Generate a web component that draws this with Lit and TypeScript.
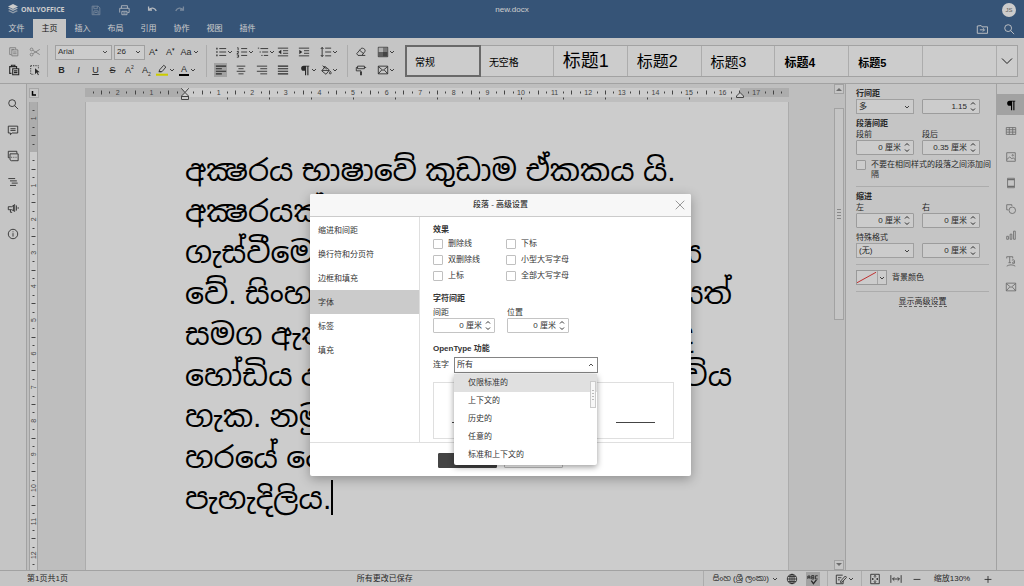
import { LitElement, html, svg, css, TemplateResult } from "lit";
import { customElement, property, state } from "lit/decorators.js";
import { classMap } from "lit/directives/class-map.js";

/* Icon strokes are drawn on a 14 x 14 grid. */
const glyphs: Record<string, any> = {
  save: svg`<path d="M2.5 2.5h7l2 2v8h-9zM4.5 2.5v3h4v-3M4.5 12v-4h5v4M5.5 10h3"/>`,
  print: svg`<path d="M4 5V2h7v3M2 10V5h11v5h-2M4.500 8.500h6v4h-6zM6 10.500h3"/>`,
  undo: svg`<path d="M3 3v4h4M3.500 6.500C6 4 10 4 12 8" stroke-width="1.500"/>`,
  redo: svg`<path d="M11 3v4H7M10.500 6.500C8 4 4 4 2 8" stroke-width="1.500"/>`,
  copy: svg`<path d="M4 10H2V2h7v2M4.500 4.500h7v7h-7zM6 7h4M6 9h4M4 4h3"/>`,
  cut: svg`<circle cx="3" cy="4" r="1.600"/><circle cx="3" cy="10" r="1.600"/><path d="M4.500 5l8 5M4.500 9l8-5"/>`,
  paste: svg`<path d="M4 11H2V3h8v2M4 3V1.500h4V3M5.500 5.500h7v7h-7zM7 8h4M7 10h4" stroke-width="1.300"/>`,
  selectAll: svg`<path d="M2 2h9v3M2 2v10h4" stroke-dasharray="1.500 1.200"/><path d="M7 5v7l2-2 1.500 3 1-.5-1.500-3h2.500z" fill="currentColor" stroke="none"/>`,
  bullets: svg`<path d="M5 3h8M5 7h8M5 11h8"/><path d="M1.500 3h1.500M1.500 7h1.500M1.500 11h1.500" stroke-width="2"/>`,
  numbers: svg`<path d="M6 3h7M6 7h7M6 11h7M1.500 2h1v3M1 6.500h2v1l-2 1.500h2M1 10.500h2v2.500H1"/>`,
  levels: svg`<path d="M4 3h9M6 7h7M8 11h5M1 2.500h1.500M3 7h1.500M5 11h1.500"/>`,
  outdent: svg`<path d="M1 2.500h12M7 5.500h6M7 8.500h6M1 11.500h12"/><path d="M5 4.500v5L1.500 7z" fill="currentColor" stroke="none"/>`,
  indent: svg`<path d="M1 2.500h12M7 5.500h6M7 8.500h6M1 11.500h12"/><path d="M1.500 4.500v5L5 7z" fill="currentColor" stroke="none"/>`,
  spacing: svg`<path d="M6 2.500h7M6 7h7M6 11.500h7M2.500 2v10M1 3.500l1.500-2L4 3.500M1 10.500l1.500 2L4 10.500"/>`,
  left: svg`<path d="M1 2.500h12M1 5.500h7M1 8.500h12M1 11.500h7" stroke-width="1.300"/>`,
  center: svg`<path d="M2 2.500h10M4 5.500h6M2 8.500h10M4 11.500h6"/>`,
  right: svg`<path d="M1 2.500h12M5 5.500h8M1 8.500h12M5 11.500h8"/>`,
  justify: svg`<path d="M1 2.500h12M1 5.500h12M1 8.500h12M1 11.500h12" stroke-width="1.300"/>`,
  pilcrow: svg`<path d="M7 8H5.500a3 3 0 0 1 0-6H12v1h-1v10H9.700V3H8.300v10H7z" fill="currentColor" stroke="none"/>`,
  fill: svg`<path d="M6 3L2 8l5 4 4-5zM3 2l5 4M2.500 7.500h8M12 8.500c-1.500 2-1.500 3 0 3s1.500-1 0-3zM5 5V2.500"/>`,
  eraser: svg`<path d="M2 9l5-6c2-1.500 6 1 4.500 3.500L8 11H3.500zM5.500 5l4.500 4M8 11h4"/>`,
  theme: svg`<path d="M1.500 1.500h11v11h-11z"/><path d="M2 7h5v5H2z" fill="#777" stroke="none"/><path d="M7 2h5v5H7z" fill="#999" stroke="none"/><path d="M7 7h5v5H7z" fill="#555" stroke="none"/><path d="M2 2h5v5H2z" fill="#ddd" stroke="none"/>`,
  brush: svg`<path d="M3 2.500h8v3H3zM3 4H1.500v4H7v2M11 4h2"/><path d="M7 9v4" stroke-width="2"/>`,
  mail: svg`<path d="M1.500 2.500h11v9h-11zM1.500 3l5.500 4.500L12.500 3M1.500 11.500l4-4.500M12.500 11.500l-4-4.500"/>`,
  pen: svg`<path d="M4 7l5-5.500 2.500 2L7 9H4zM3 9h3"/><path d="M0 12.500h14" stroke="#ff0" stroke-width="2.400"/>`,
  search: svg`<circle cx="6" cy="6" r="4"/><path d="M9 9l4 4"/>`,
  comment: svg`<path d="M1.500 2.500h11v8H6l-2 2v-2H1.500zM4 5.500h6M4 7.500h6"/>`,
  chat: svg`<path d="M3 9H1.500V1.500h10V4M3.500 4.500h9.500v8H5l-1.500-1zM5 8.500h1M7.500 8.500h1M10 8.500h1"/>`,
  headings: svg`<path d="M1.500 3h8M3.500 5.700h8M5.500 8.300h7M3.500 11h7"/>`,
  feedback: svg`<path d="M1.500 5.500h4L9 3v8L5.500 9h-4zM4 9v3h2M7.500 4v6M11 4v6M13 6v2"/>`,
  about: svg`<circle cx="7" cy="7" r="5.500"/><path d="M7 6v4M7 4v1"/>`,
  folder: svg`<path d="M1.500 3.500V12h12V4.500H7l-1-1.500zM4.500 8h5M8 6l2 2-2 2"/>`,
  table: svg`<path d="M1.500 3h11v8h-11zM1.500 5.500h11M1.500 8.300h11M5 3v8M9 3v8"/>`,
  image: svg`<path d="M2 2h10v10H2zM2 10l3.500-3 2.500 2 1.500-1L12 10"/><circle cx="9" cy="5" r=".8"/>`,
  header: svg`<path d="M3 1.500h8v11H3z"/><path d="M3 3h8M3 11h8" stroke-width="1.500"/>`,
  shape: svg`<path d="M8 3.500V2H2v6h2"/><circle cx="8.500" cy="8.500" r="3.800"/>`,
  chart: svg`<path d="M2 8.500h2v3.500H2zM6 6h2v6H6zM10 2.500h2V12h-2z"/>`,
  textart: svg`<path d="M2 4V2h7v2M5.500 2v7M4 9h3M8 6c3-1 3 0 3 1v3M11 8c-3 0-3 2-1.500 2L11 9M2 13c3-2 7-2 10 0"/>`,
  globe: svg`<circle cx="7" cy="7" r="5.500"/><ellipse cx="7" cy="7" rx="2.500" ry="5.500"/><path d="M1.500 7h11M2.500 4h9M2.500 10h9M7 1.500v11"/>`,
  check: svg`<path d="M5 9l2.500 3.500L11 8" stroke-width="1.500"/><path d="M1 7V3.500h2.500V7M1 5h2.500M5.500 3v4H8V3zM5.500 5H8M12.500 3.200H10V7h2.500"/>`,
  track: svg`<path d="M9 2.500H1.500v10h8V9M3.500 5.500h4M3.500 8h2M6.500 9.500l5.500-6 1.500 1.500-5 5.500-2 .5z"/>`,
  fitPage: svg`<path d="M2 1.500h10v11H2zM7 3v2.500M5.800 4L7 2.800 8.200 4M7 11V8.500M5.800 10L7 11.200 8.200 10M3.500 7H6M8 7h2.500M4.500 6l-1 1 1 1M9.500 6l1 1-1 1"/>`,
  fitWidth: svg`<path d="M1 2.500v9M13 2.500v9M3 7h8M5 5L3 7l2 2M9 5l2 2-2 2"/>`,
  minus: svg`<path d="M3 7.500h8"/>`,
  plus: svg`<path d="M3 7.500h8M7 3.500v8"/>`,
  close: svg`<path d="M2 2l10 10M12 2L2 12"/>`,
};
const icon = (name: string) =>
  html`<svg class="icon" viewBox="0 0 14 14" aria-hidden="true">${glyphs[name]}</svg>`;
const caret = (up = false) => html`<svg class="caret" viewBox="0 0 8 8" aria-hidden="true">
  <path d=${up ? "M2 5l2-2 2 2" : "M2 3l2 2 2-2"} /></svg>`;

const shared = css`
  * { box-sizing: border-box; }
  button, input, select { font: inherit; color: inherit; margin: 0; padding: 0; border: 0; background: none; border-radius: 0; }
  button { display: flex; align-items: center; justify-content: center; cursor: pointer; white-space: nowrap; }
  select { appearance: none; min-width: 0; outline: none; }
  .icon { width: 12px; height: 12px; flex: none; fill: none; stroke: currentColor; stroke-width: 1; }
  .caret { width: 8px; height: 8px; flex: none; fill: none; stroke: currentColor; stroke-width: 1; opacity: .85; }
  .combo { display: flex; align-items: center; height: 15px; padding: 0 2px; border: 1px solid #c8c8c8; background: #fff; }
  .combo select { flex: 1; }
  input[type="checkbox"] { appearance: none; flex: none; width: 10px; height: 10px; border: 1px solid #c0c0c0; border-radius: 1px; background: #fff; }
  input[type="checkbox"]:checked { background: #444; }
`;

@customElement("spin-field")
class SpinField extends LitElement {
  @property() value = "";
  @property() label = "";
  static styles = [shared, css`
    :host { display: flex; height: 15px; align-items: center; border: 1px solid #c4c4c4; border-radius: 1px; background: #fff; }
    input { flex: 1; width: 0; min-width: 0; text-align: right; outline: none; }
    svg { width: 10px; height: 13px; fill: none; stroke: currentColor; flex: none; margin: 0 1px; }
  `];
  render() {
    return html`<input aria-label=${this.label} .value=${this.value} />
      <svg viewBox="0 0 10 13" aria-hidden="true"><path d="M3 4.500l2-2 2 2M3 8.500l2 2 2-2" /></svg>`;
  }
}

const UNIT = 33.6;

@customElement("page-ruler")
class PageRuler extends LitElement {
  @property({ type: Boolean, reflect: true }) vertical = false;
  static styles = css`
    :host { display: block; overflow: hidden; }
    svg { display: block; width: 100%; height: 100%; }
    text { font: 7px "Liberation Sans", sans-serif; fill: #555; text-anchor: middle; }
    .band { fill: #d9d9d9; }
    .live { fill: #fff; }
    .tick { stroke: #555; }
    .marker { fill: #fff; stroke: #555; }
  `;
  private marks(zero: number, from: number, to: number) {
    const out: any[] = [];
    for (let q = from; q <= to; q++) {
      if (q === 0) continue;
      const p = zero + (q * UNIT) / 4;
      if (q % 4 === 0) {
        const n = Math.abs(q / 4);
        out.push(this.vertical
          ? svg`<text transform="translate(6 ${p}) rotate(-90)">${n}</text>`
          : svg`<text x=${p} y="7">${n}</text>`);
      } else {
        const c = Math.round(p) + 0.5;
        const h = q % 2 === 0 ? 2 : 1;
        out.push(this.vertical
          ? svg`<line class="tick" x1=${3.5 - h} x2=${3.5 + h} y1=${c} y2=${c} />`
          : svg`<line class="tick" y1=${4.5 - h} y2=${4.5 + h} x1=${c} x2=${c} />`);
      }
    }
    return out;
  }
  render() {
    if (this.vertical) {
      return html`<svg aria-hidden="true"><rect class="band" width="9" height="50" />
        <rect class="live" y="50" width="9" height="100%" />${this.marks(50, -5, 51)}</svg>`;
    }
    const tabs = Array.from({ length: 13 }, (_, i) => 142.5 + i * 42);
    return html`<svg aria-hidden="true">
      <rect class="band" width="100%" height="9" />
      <rect class="live" x="100" width="555" height="9" />
      ${this.marks(100, -11, 71)}
      ${tabs.map((x) => svg`<line class="tick" x1=${x} x2=${x} y1="9.500" y2="11.500" />`)}
      <path class="marker" d="M96.500 -1.500h7v2L100 4.500l-3.500-4zM100 4.500l3.500 3.500v3.500h-7V8zM96.500 8.500h7" />
      <path class="marker" d="M655 4.500l3.500 3.500v1.500h-7V8z" />
    </svg>`;
  }
}

@customElement("paragraph-dialog")
class ParagraphDialog extends LitElement {
  @state() tab = "字体";
  static styles = [shared, css`
    :host { display: block; width: 381px; border-radius: 2px; background: #fff; color: #333; font-size: 8px; line-height: 10px; box-shadow: 0 3px 12px rgba(0, 0, 0, .3); }
    header { display: grid; grid-template-columns: 22px 1fr 22px; align-items: center; height: 23px; background: #f7f7f7; border-bottom: 1px solid #cbcbcb; border-radius: 2px 2px 0 0; }
    h2, h3 { margin: 0; font-size: 8px; line-height: 10px; }
    h2 { grid-column: 2; text-align: center; font-weight: 500; }
    header button { color: #888; }
    .body { display: grid; grid-template-columns: 110px 1fr; height: 225px; }
    nav { padding-top: 1px; border-right: 1px solid #dfdfdf; }
    nav button { width: 100%; height: 24px; justify-content: flex-start; padding: 1px 0 0 8px; }
    nav .active { background: #cbcbcb; }
    .pane { padding: 8px 17px 0 13px; }
    .checks { display: grid; grid-template-columns: 73px 1fr; row-gap: 6px; margin: 4px 0 13px; }
    label { display: flex; align-items: center; gap: 5px; }
    .fields { display: flex; gap: 12px; margin: 4px 0 11px; }
    .field { display: block; width: 62px; }
    .field span { display: block; }
    .liga { display: flex; align-items: center; gap: 5px; margin-top: 3px; position: relative; }
    .liga .combo { width: 144px; height: 16px; border-color: #848484; }
    .preview { display: flex; justify-content: space-between; margin-top: 9px; height: 57px; padding: 39px 18px 0; border: 1px solid #dfdfdf; }
    .rule { width: 39px; height: 1px; background: #444; }
    .menu { position: absolute; left: 21px; top: 17px; width: 143px; margin: 0; padding: 0 0 1px; list-style: none; background: #fff; border-radius: 2px; box-shadow: 0 2px 6px rgba(0, 0, 0, .4); }
    .menu li { height: 18px; padding: 4px 14px; }
    .menu .hover { background: #e0e0e0; }
    .thumb { position: absolute; right: 1px; top: 7px; width: 6px; height: 27px; border: 1px solid #cbcbcb; background: #f7f7f7; display: flex; flex-direction: column; align-items: center; justify-content: center; gap: 2px; }
    .thumb i { width: 2px; height: 1px; background: #bbb; }
    footer { display: flex; justify-content: center; gap: 7px; padding: 10px 0 8px; border-top: 1px solid #dfdfdf; }
    footer button { width: 59px; height: 15px; border-radius: 1px; border: 1px solid #c0c0c0; }
    footer .primary { background: #444; border-color: #444; color: #fff; }
  `];
  render() {
    const tabs = ["缩进和间距", "换行符和分页符", "边框和填充", "字体", "标签", "填充"];
    const effects = ["删除线", "下标", "双删除线", "小型大写字母", "上标", "全部大写字母"];
    const ligatures = ["仅限标准的", "上下文的", "历史的", "任意的", "标准和上下文的"];
    return html`
      <header><h2>段落 - 高级设置</h2><button aria-label="关闭">${icon("close")}</button></header>
      <div class="body">
        <nav>${tabs.map((t) => html`<button class=${classMap({ active: t === this.tab })}
          @click=${() => (this.tab = t)}>${t}</button>`)}</nav>
        <div class="pane">
          <h3>效果</h3>
          <div class="checks">${effects.map((e) => html`<label><input type="checkbox" />${e}</label>`)}</div>
          <h3>字符间距</h3>
          <div class="fields">
            <div class="field"><span>间距</span><spin-field label="间距" value="0 厘米"></spin-field></div>
            <div class="field"><span>位置</span><spin-field label="位置" value="0 厘米"></spin-field></div>
          </div>
          <h3>OpenType 功能</h3>
          <div class="liga">
            <label for="liga">连字</label>
            <div class="combo"><select id="liga"><option>所有</option></select>${caret(true)}</div>
            <ul class="menu">
              ${ligatures.map((l, i) => html`<li class=${classMap({ hover: i === 0 })}>${l}</li>`)}
              <div class="thumb"><i></i><i></i><i></i><i></i></div>
            </ul>
          </div>
          <div class="preview"><div class="rule"></div><div class="rule"></div></div>
        </div>
      </div>
      <footer><button class="primary" aria-label="确定"></button><button aria-label="取消"></button></footer>`;
  }
}

interface Line { head: string; tail?: string; inset?: number; }

@customElement("app-root")
class AppRoot extends LitElement {
  static styles = [shared, css`
    :host { display: flex; flex-direction: column; height: 100vh; position: relative; overflow: hidden; background: #f7f7f7; color: #222; font: 8px/10px "Liberation Sans", "Noto Sans CJK SC", "Noto Sans Sinhala", sans-serif; }
    .top { background: #446995; color: #fff; }
    .title { display: grid; grid-template-columns: 1fr auto 1fr; align-items: center; height: 19px; padding: 0 8px; }
    .brand { display: flex; align-items: center; gap: 20px; }
    .logo { display: flex; align-items: center; gap: 3px; width: 64px; font: bold 7px/10px "Open Sans", sans-serif; }
    .logo svg { width: 10px; height: 11px; flex: none; fill: #fff; }
    .brand button { width: 8px; opacity: .85; }
    .brand button.off { opacity: .45; }
    .avatar { justify-self: end; width: 14px; height: 14px; border-radius: 50%; background: #fff; color: #777; font-size: 6px; line-height: 14px; text-align: center; }
    .tabs { display: flex; height: 19px; padding-right: 9px; align-items: stretch; }
    .tabs button { width: 33px; }
    .tabs .active { background: #f7f7f7; color: #222; }
    .tabs .tools { display: flex; gap: 15px; margin-left: auto; }
    .tabs .tools button { width: 12px; }
    .toolbar { display: flex; height: 46px; padding: 7px 6px 6px 0; border-bottom: 1px solid #cbcbcb; color: #333; }
    .group { display: flex; flex-direction: column; gap: 4px; padding: 0 7px; border-right: 1px solid #d8d8d8; }
    .group.clip { padding: 0 2px 0 3px; }
    .group.letters { padding: 0 5px; }
    .group.last { border-right: 0; }
    .row { display: flex; align-items: center; height: 14px; }
    .row button { width: 17px; height: 14px; }
    .clip .row button { width: 21px; }
    .row .wide { width: 22px; }
    .row .list { width: 21px; }
    .row .list .icon { margin-right: -1px; }
    .row .solo { justify-content: flex-start; }
    .row .active { background: #cbcbcb; width: 13px; margin-right: 8px; }
    .row .dim { color: #999; }
    .row .combo { margin-left: 2px; }
    .row .font { width: 57px; color: #444; }
    .row .size { width: 31px; }
    .letters button { font-size: 9px; }
    .letters .ink { display: inline-block; line-height: 9px; border-bottom: 2px solid #000; width: 10px; text-align: center; }
    .row sup, .row sub { font-size: 5px; line-height: 0; }
    .styles { flex: 1; display: flex; margin-left: 1px; height: 32px; border: 1px solid #cbcbcb; background: #fff; color: #000; }
    .styles .style { flex: 1; justify-content: flex-start; padding-left: 9px; border-right: 1px solid #d8d8d8; }
    .styles .style.chosen { outline: 2px solid #848484; outline-offset: -1px; }
    .styles .more { width: 20px; }
    .styles .more .caret { width: 20px; height: 20px; stroke-width: .4; }
    .s10 { font-size: 10px; padding-top: 4px; } .s18 { font-size: 18px; } .s16 { font-size: 16px; padding-top: 1px; } .s14 { font-size: 14px; padding-top: 2px; }
    .s12 { font-size: 12px; font-weight: bold; padding-top: 4px; } .s11 { font-size: 11px; font-weight: bold; padding-top: 4px; }
    .main { flex: 1; min-height: 0; display: flex; color: #333; }
    .rail { display: flex; flex-direction: column; width: 27px; padding-top: 7px; border-right: 1px solid #cbcbcb; }
    .rail button { height: 26px; }
    .rail.right { width: 28px; border-right: 0; border-left: 1px solid #cbcbcb; color: #888; padding-top: 10px; gap: 5px; }
    .rail.right button { height: 21px; }
    .rail.right .active { background: #cbcbcb; color: #000; }
    .editor { flex: 1; min-width: 0; display: grid; grid-template-columns: 12px 1fr 11px; grid-template-rows: 18px 1fr; background: #eee; border-right: 1px solid #cbcbcb; }
    .corner { margin: 4px 0 4px 2px; border: 1px solid #d0d0d0; background: #f7f7f7; }
    .corner svg { display: block; width: 7px; height: 8px; fill: none; stroke: #000; stroke-width: 1.5; }
    .hruler { margin: 3px 45px 0 46px; padding-top: 1px; height: 15px; }
    .vruler { margin: 0 1px 0 2px; border: solid #cbcbcb; border-width: 0 1px; }
    .page { margin: 0 45px 0 46px; padding: 48px 50px 0 99px; background: #fff; border: solid #d8d8d8; border-width: 0 1px 0 1px; color: #000; font-size: 30px; line-height: 41px; overflow: hidden; }
    .line { display: flex; justify-content: space-between; white-space: pre; height: 41px; }
    .caretbar { display: inline-block; width: 2px; height: 35px; background: #000; vertical-align: -6px; }
    .scroll { grid-column: 3; grid-row: 1 / 3; display: flex; flex-direction: column; justify-content: space-between; width: 10px; }
    .scroll button { width: 10px; height: 10px; border: 1px solid #cbcbcb; background: #f7f7f7; color: #888; }
    .track { flex: 1; padding-top: 14px; }
    .bar { height: 212px; border: 1px solid #cbcbcb; background: #f7f7f7; display: flex; flex-direction: column; align-items: center; justify-content: center; gap: 2px; }
    .bar i { width: 4px; height: 1px; background: #aaa; }
    .side { width: 150px; padding: 5px 0 0 10px; }
    .side h3 { margin: 0; font-size: 8px; line-height: 10px; }
    .pair { display: grid; grid-template-columns: 58px 58px; column-gap: 8px; margin-bottom: 5px; }
    .pair span { line-height: 11px; }
    .side hr { width: 133px; height: 1px; margin: 6px 0 5px; border: 0; background: #d8d8d8; }
    .special { display: block; }
    .nospace { display: flex; gap: 5px; padding-right: 3px; }
    .swatch { display: flex; align-items: center; gap: 5px; }
    .swatch button { width: 31px; height: 15px; border: 1px solid #c0c0c0; background: #fff; }
    .swatch .none { width: 21px; height: 13px; stroke: #e33; border-right: 1px solid #d0d0d0; }
    .more-link { text-align: center; width: 133px; }
    .more-link a { color: inherit; text-decoration: none; border-bottom: 1px dashed #777; }
    .status { display: flex; align-items: center; height: 16px; border-top: 1px solid #cbcbcb; padding-left: 27px; color: #333; }
    .status .pages { flex: 20; }
    .status .saved { flex: 21; }
    .status .set { display: flex; align-items: center; height: 15px; border-left: 1px solid #d8d8d8; }
    .status button { height: 14px; width: 21px; }
    .status .lang { width: auto; gap: 2px; padding: 0 2px 0 9px; }
    .status .active { width: 14px; background: #cbcbcb; margin: 0 7px 0 4px; }
    .status .track-set { width: 34px; padding-left: 6px; }
    .status .zoom { padding-left: 2px; width: 163px; }
    .status .zoom span { width: 50px; text-align: center; }
    .mask { position: absolute; inset: 0; background: rgba(0, 0, 0, .2); }
    paragraph-dialog { position: absolute; left: 310px; top: 194px; }
  `];

  private lines: Line[] = [
    { head: "අක්‍ෂරය භාෂාවේ කුඩාම ඒකකය යි." },
    { head: "අක්‍ෂරයක්" },
    { head: "ගැස්වීමෙ", tail: "ය", inset: 36 },
    { head: "වේ. සිංහ", tail: "යත්", inset: 6 },
    { head: "සමග ඇත", tail: "ද", inset: 45 },
    { head: "හෝඩිය ද", tail: "විය", inset: 6 },
    { head: "හැක. නමු" },
    { head: "හරයේ දෙ" },
    { head: "පැහැදිලිය." },
  ];

  private btn(name: string, label: string, cls = ""): TemplateResult {
    return html`<button class=${cls} aria-label=${label}>${icon(name)}</button>`;
  }
  private drop(name: string, label: string, cls = "list"): TemplateResult {
    return html`<button class=${cls} aria-label=${label}>${icon(name)}${caret()}</button>`;
  }

  private toolbar() {
    const styles = [["常规", "s10"], ["无空格", "s10"], ["标题1", "s18"], ["标题2", "s16"],
      ["标题3", "s14"], ["标题4", "s12"], ["标题5", "s11"], ["", "s10"]];
    return html`<div class="toolbar">
      <div class="group clip">
        <div class="row">${this.btn("copy", "复制", "dim")}${this.btn("cut", "剪切", "dim")}</div>
        <div class="row">${this.btn("paste", "粘贴")}${this.btn("selectAll", "全选")}</div>
      </div>
      <div class="group letters">
        <div class="row">
          <div class="combo font"><select aria-label="字体"><option>Arial</option></select>${caret()}</div>
          <div class="combo size"><select aria-label="字号"><option>26</option></select>${caret()}</div>
          <button><span>A<sup>▴</sup></span></button><button><span>A<sup>▾</sup></span></button>
          <button class="wide">Aa${caret()}</button>
        </div>
        <div class="row">
          <button><b>B</b></button><button><i>I</i></button><button><u>U</u></button><button><s>S</s></button>
          <button><span>A<sup>2</sup></span></button><button><span>A<sub>2</sub></span></button>
          ${this.drop("pen", "突出显示", "wide")}
          <button class="wide"><span class="ink">A</span>${caret()}</button>
        </div>
      </div>
      <div class="group">
        <div class="row">
          ${this.drop("bullets", "项目符号")}${this.drop("numbers", "编号")}${this.drop("levels", "多级列表")}
          ${this.btn("outdent", "减少缩进", "list solo")}${this.btn("indent", "增加缩进", "list solo")}${this.drop("spacing", "行距")}
        </div>
        <div class="row">
          ${this.btn("left", "左对齐", "active")}${this.btn("center", "居中", "list solo")}${this.btn("right", "右对齐", "list solo")}
          ${this.btn("justify", "两端对齐", "list solo")}${this.drop("pilcrow", "非打印字符")}${this.drop("fill", "底纹")}
        </div>
      </div>
      <div class="group last">
        <div class="row">${this.btn("eraser", "清除样式", "list solo")}${this.drop("theme", "配色方案")}</div>
        <div class="row">${this.btn("brush", "复制样式", "list solo")}${this.drop("mail", "邮件合并")}</div>
      </div>
      <div class="styles">
        ${styles.map(([t, c], i) => html`<button class="style ${c} ${i === 0 ? "chosen" : ""}">${t}</button>`)}
        <button class="more" aria-label="更多样式">${caret()}</button>
      </div>
    </div>`;
  }

  private side() {
    return html`<aside class="side">
      <h3>行间距</h3>
      <div class="pair">
        <div class="combo"><select aria-label="行间距"><option>多</option></select>${caret()}</div>
        <spin-field label="行间距值" value="1.15"></spin-field>
      </div>
      <h3>段落间距</h3>
      <div class="pair"><span>段前</span><span>段后</span>
        <spin-field label="段前" value="0 厘米"></spin-field><spin-field label="段后" value="0.35 厘米"></spin-field></div>
      <label class="nospace"><input type="checkbox" /><span>不要在相同样式的段落之间添加间隔</span></label>
      <hr />
      <h3>缩进</h3>
      <div class="pair"><span>左</span><span>右</span>
        <spin-field label="左" value="0 厘米"></spin-field><spin-field label="右" value="0 厘米"></spin-field></div>
      <label class="special" for="special">特殊格式</label>
      <div class="pair">
        <div class="combo"><select id="special"><option>(无)</option></select>${caret()}</div>
        <spin-field label="特殊格式值" value="0 厘米"></spin-field></div>
      <hr />
      <div class="swatch"><button id="bg" aria-label="背景颜色"><svg class="none" viewBox="0 0 21 13"><path d="M0 12L20 1" /></svg>${caret()}</button>
        <label for="bg">背景颜色</label></div>
      <hr />
      <div class="more-link"><a href="#">显示高级设置</a></div>
    </aside>`;
  }

  render() {
    const tabs = ["文件", "主页", "插入", "布局", "引用", "协作", "视图", "插件"];
    return html`
      <div class="top">
        <div class="title">
          <div class="brand">
            <div class="logo"><svg viewBox="0 0 20 22"><path d="M10 0l10 5-10 5L0 5z" /><path d="M0 9l3-1.500 7 3.500 7-3.500L20 9l-10 5z" opacity=".8" /><path d="M0 14l3-1.500 7 3.500 7-3.500 3 1.500-10 5z" opacity=".6" /></svg>ONLYOFFICE</div>
            ${this.btn("save", "保存", "off")}${this.btn("print", "打印")}${this.btn("undo", "撤消")}${this.btn("redo", "重做", "off")}
          </div>
          <span>new.docx</span><div class="avatar">JS</div>
        </div>
        <div class="tabs">${tabs.map((t, i) => html`<button class=${classMap({ active: i === 1 })}>${t}</button>`)}
          <div class="tools">${this.btn("folder", "打开位置")}${this.btn("search", "搜索")}</div></div>
      </div>
      ${this.toolbar()}
      <div class="main">
        <div class="rail">${[["search", "查找"], ["comment", "批注"], ["chat", "聊天"], ["headings", "标题"], ["feedback", "反馈"], ["about", "关于"]]
          .map(([n, l]) => this.btn(n, l))}</div>
        <div class="editor">
          <div class="corner"><svg viewBox="0 0 7 8"><path d="M2.500 2v4H6" /></svg></div>
          <page-ruler class="hruler"></page-ruler>
          <div class="scroll">
            <button aria-label="向上"><svg width="6" height="4"><path d="M0 4l3-3 3 3z" fill="currentColor" /></svg></button>
            <div class="track"><div class="bar"><i></i><i></i><i></i><i></i></div></div>
            <button aria-label="向下"><svg width="6" height="4"><path d="M0 0l3 3 3-3z" fill="currentColor" /></svg></button>
          </div>
          <page-ruler class="vruler" vertical></page-ruler>
          <div class="page">${this.lines.map((l, i) => html`<div class="line" style="padding-right:${l.inset ?? 0}px"><span>${l.head}${i === 8 ? html`<span class="caretbar"></span>` : ""}</span>${l.tail ? html`<span>${l.tail}</span>` : ""}</div>`)}</div>
        </div>
        ${this.side()}
        <div class="rail right">${[["pilcrow", "段落"], ["table", "表格"], ["image", "图片"], ["header", "页眉"], ["shape", "形状"], ["chart", "图表"], ["textart", "艺术字"], ["mail", "邮件"]]
          .map(([n, l], i) => this.btn(n, l, i === 0 ? "active" : ""))}</div>
      </div>
      <div class="status">
        <span class="pages">第1页共1页</span><span class="saved">所有更改已保存</span>
        <div class="set"><button class="lang">සිංහ (ශ්‍රී ලංකා) ${caret()}</button>${this.btn("globe", "语言")}${this.btn("check", "拼写检查", "active")}</div>
        <div class="set track-set">${this.drop("track", "修订")}</div>
        <div class="set zoom">${this.btn("fitPage", "适合页面")}${this.btn("fitWidth", "适合宽度")}${this.btn("minus", "缩小")}<span>缩放130%</span>${this.btn("plus", "放大")}</div>
      </div>
      <div class="mask"></div>
      <paragraph-dialog role="dialog"></paragraph-dialog>`;
  }
}
